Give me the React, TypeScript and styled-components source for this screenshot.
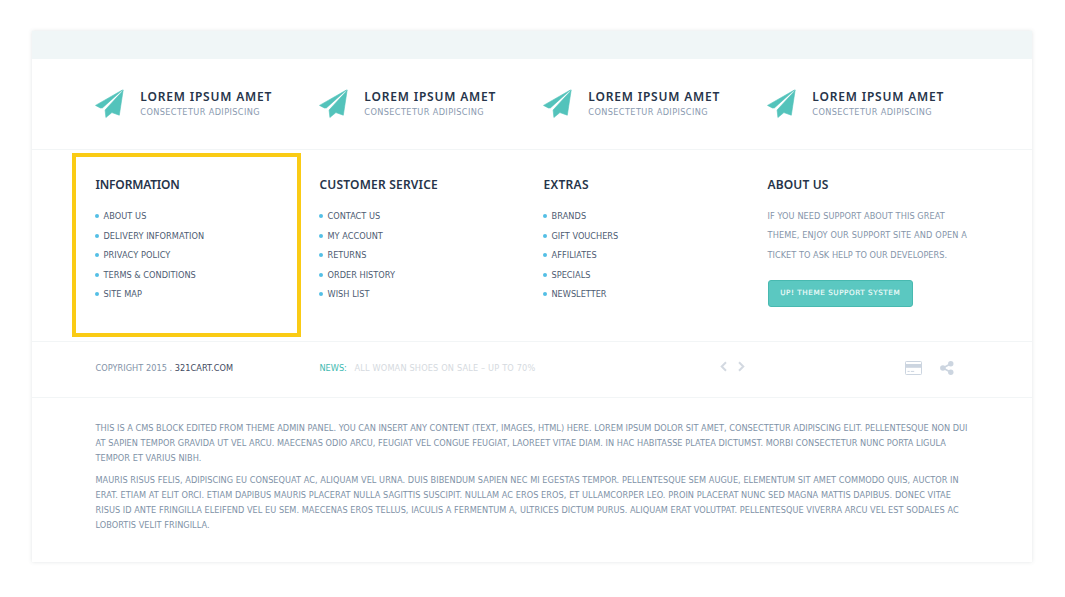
import React from "react";
import styled, { createGlobalStyle } from "styled-components";

const GlobalStyle = createGlobalStyle`
  * { box-sizing: border-box; }
  body {
    margin: 0;
    background: #fff;
    font-family: "DejaVu Sans", sans-serif;
    font-size: 8.2px;
    color: #8c9bad;
    text-transform: uppercase;
  }
  h3, h4, p, ul { margin: 0; padding: 0; font-weight: 400; }
  ul { list-style: none; }
`;

const Page = styled.div`
  padding: 31px 33px 34px 32px;
`;

const Card = styled.main`
  background: #fff;
  height: 531px;
  box-shadow: 0 0 4px rgba(70, 85, 95, 0.16);
`;

const TopBand = styled.div`
  height: 28px;
  background: #f0f6f7;
`;

const Section = styled.section<{ $height: number; $top: number }>`
  display: grid;
  grid-template-columns: repeat(4, 224px);
  height: ${(p) => p.$height}px;
  padding: ${(p) => p.$top}px 0 0 63.5px;
  border-bottom: 1px solid #f2f5f6;
`;

const Feature = styled.div`
  display: flex;
`;

const PlaneIcon = styled.svg`
  flex: none;
  width: 30px;
  height: 30px;
  margin: 0 15.2px 0 -0.4px;
`;

const Title = styled.h3<{ $ls?: number }>`
  font: 600 12px/15px "Noto Sans", sans-serif;
  letter-spacing: ${(p) => p.$ls ?? 0}px;
  color: #26344a;
  white-space: nowrap;
`;

const Caption = styled.p`
  padding-top: 1px;
  line-height: 15px;
  letter-spacing: 0.38px;
  color: #8a9ab0;
  white-space: nowrap;
`;

const Column = styled.div`
  position: relative;
`;

const Highlight = styled.div`
  position: absolute;
  left: -23.5px;
  top: -24px;
  width: 229px;
  height: 184px;
  border: 4px solid #facb15;
`;

const Links = styled.ul`
  margin-top: 14.5px;
`;

const LinkItem = styled.li<{ $ls: number }>`
  display: flex;
  align-items: center;
  height: 19.45px;
  letter-spacing: ${(p) => p.$ls}px;
  color: #4d5b72;
  white-space: nowrap;
  &::before {
    content: "";
    width: 4px;
    height: 4px;
    margin: 0 4.4px 0 -0.4px;
    border-radius: 50%;
    background: #53bfe5;
  }
`;

const Line = styled.span<{ $ls: number }>`
  display: block;
  white-space: nowrap;
  letter-spacing: ${(p) => p.$ls}px;
`;

const Support = styled.p`
  margin-top: 14.8px;
  line-height: 19.45px;
  color: #8595aa;
`;

const Button = styled.button`
  display: block;
  width: 145.5px;
  height: 27px;
  margin-top: 14.6px;
  padding: 0;
  border: 1px solid #48b9b0;
  border-radius: 3px;
  background: #5bc8c1;
  color: #f2fcfb;
  font: 400 7.2px/24px "DejaVu Sans", sans-serif;
  letter-spacing: 0.58px;
  text-transform: uppercase;
  -webkit-text-stroke: 0.15px #f2fcfb;
  white-space: nowrap;
`;

const Copyright = styled.p`
  line-height: 15px;
  color: #8292a7;
  letter-spacing: 0.03px;
  white-space: nowrap;
  b { font-weight: 400; color: #3f4b62; }
`;

const News = styled.div`
  display: flex;
  grid-column: span 2;
  line-height: 15px;
  color: #d5dae0;
  white-space: nowrap;
`;

const NewsLabel = styled.span`
  width: 35px;
  color: #3fbab1;
`;

const NewsText = styled.span`
  letter-spacing: 0.17px;
`;

const Arrows = styled.div`
  display: flex;
  gap: 11px;
  margin: 0 0 0 auto;
  padding-right: 22.9px;
  svg { width: 7px; height: 11px; }
`;

const Icons = styled.div`
  display: flex;
  gap: 18px;
  padding-left: 137px;
  svg { display: block; margin-top: -1px; }
`;

const Content = styled.section`
  padding: 23px 63.5px 0;
  line-height: 15px;
  color: #8092a7;
  p + p { margin-top: 7px; }
`;

const Plane = () => (
  <PlaneIcon viewBox="0 0 30 30" fill="#53c3bb" stroke="#53c3bb" strokeWidth=".6" strokeLinejoin="round">
    <path d="M.5 16.4 27.4 1 7.4 18.9 5.4 19Z" />
    <path d="M28.2 .9 24.3 26.2 16.9 23.6 10.9 28.5 10.1 21 26.2 3.4Z" />
  </PlaneIcon>
);

const columns: { title: string; ls: number; links: [string, number][] }[] = [
  {
    title: "Information", ls: -0.18,
    links: [["About us", 0.08], ["Delivery Information", 0.07], ["Privacy Policy", 0.09], ["Terms & Conditions", 0.02], ["Site Map", 0.05]],
  },
  {
    title: "Customer Service", ls: 0.2,
    links: [["Contact Us", 0.0], ["My Account", 0.02], ["Returns", 0], ["Order History", 0.01], ["Wish List", 0.05]],
  },
  {
    title: "Extras", ls: 0.3,
    links: [["Brands", 0.08], ["Gift Vouchers", 0], ["Affiliates", 0.05], ["Specials", 0.02], ["Newsletter", 0]],
  },
];

const support: [string, number][] = [
  ["If you need support about this great", 0.08],
  ["theme, enjoy our support site and open a", 0.14],
  ["ticket to ask help to our developers.", 0.02],
];

const paragraphs: [string, number][][] = [
  [
    ["This is a CMS block edited from theme admin panel. You can insert any content (text, images, HTML) here. Lorem ipsum dolor sit amet, consectetur adipiscing elit. Pellentesque non dui", 0.018],
    ["at sapien tempor gravida ut vel arcu. Maecenas odio arcu, feugiat vel congue feugiat, laoreet vitae diam. In hac habitasse platea dictumst. Morbi consectetur nunc porta ligula", 0.035],
    ["tempor et varius nibh.", 0.04],
  ],
  [
    ["Mauris risus felis, adipiscing eu consequat ac, aliquam vel urna. Duis bibendum sapien nec mi egestas tempor. Pellentesque sem augue, elementum sit amet commodo quis, auctor in", 0.043],
    ["erat. Etiam at elit orci. Etiam dapibus mauris placerat nulla sagittis suscipit. Nullam ac eros eros, et ullamcorper leo. Proin placerat nunc sed magna mattis dapibus. Donec vitae", 0.05],
    ["risus id ante fringilla eleifend vel eu sem. Maecenas eros tellus, iaculis a fermentum a, ultrices dictum purus. Aliquam erat volutpat. Pellentesque viverra arcu vel est sodales ac", 0.034],
    ["lobortis velit fringilla.", 0.03],
  ],
];

export default function App() {
  return (
    <Page>
      <GlobalStyle />
      <Card>
        <TopBand />
        <Section $height={91} $top={30}>
          {[0, 1, 2, 3].map((i) => (
            <Feature key={i}>
              <Plane />
              <div>
                <Title $ls={0.82}>Lorem ipsum amet</Title>
                <Caption>Consectetur adipiscing</Caption>
              </div>
            </Feature>
          ))}
        </Section>
        <Section $height={192} $top={27}>
          {columns.map((c, i) => (
            <Column key={c.title}>
              {i === 0 && <Highlight />}
              <Title $ls={c.ls}>{c.title}</Title>
              <Links>
                {c.links.map(([t, ls]) => <LinkItem key={t} $ls={ls}>{t}</LinkItem>)}
              </Links>
            </Column>
          ))}
          <Column>
            <Title $ls={0.15}>About us</Title>
            <Support>
              {support.map(([t, ls]) => <Line key={t} $ls={ls}>{t}</Line>)}
            </Support>
            <Button>UP! Theme support system</Button>
          </Column>
        </Section>
        <Section $height={56} $top={19}>
          <Copyright>Copyright 2015 . <b>321cart.com</b></Copyright>
          <News>
            <NewsLabel>News:</NewsLabel>
            <NewsText>All woman shoes on sale – up to 70%</NewsText>
            <Arrows>
              <svg viewBox="0 0 7 11" fill="none" stroke="#d3d9e1" strokeWidth="2"><path d="M6 1.2 1.7 5.5 6 9.8" /></svg>
              <svg viewBox="0 0 7 11" fill="none" stroke="#d3d9e1" strokeWidth="2"><path d="M1 1.2 5.3 5.5 1 9.8" /></svg>
            </Arrows>
          </News>
          <Icons>
            <svg width="17" height="16" viewBox="0 0 17 16">
              <rect x=".5" y="1.5" width="16" height="13" rx=".8" fill="none" stroke="#ccd5e0" />
              <path d="M1 4h15v3.8H1z" fill="#ccd5e0" />
              <path d="M2.5 11.4h2.2M5.8 11.4h3.4" stroke="#ccd5e0" />
            </svg>
            <svg width="14" height="16" viewBox="0 0 14 16" fill="#ccd5e0">
              <circle cx="2.9" cy="8" r="2.8" />
              <circle cx="10.8" cy="3.7" r="2.7" />
              <circle cx="10.8" cy="12.3" r="2.7" />
              <path d="M10.8 3.7 2.9 8l7.9 4.3" fill="none" stroke="#ccd5e0" strokeWidth="1.7" />
            </svg>
          </Icons>
        </Section>
        <Content>
          {paragraphs.map((lines, i) => (
            <p key={i}>{lines.map(([t, ls]) => <Line key={t} $ls={ls}>{t}</Line>)}</p>
          ))}
        </Content>
      </Card>
    </Page>
  );
}
